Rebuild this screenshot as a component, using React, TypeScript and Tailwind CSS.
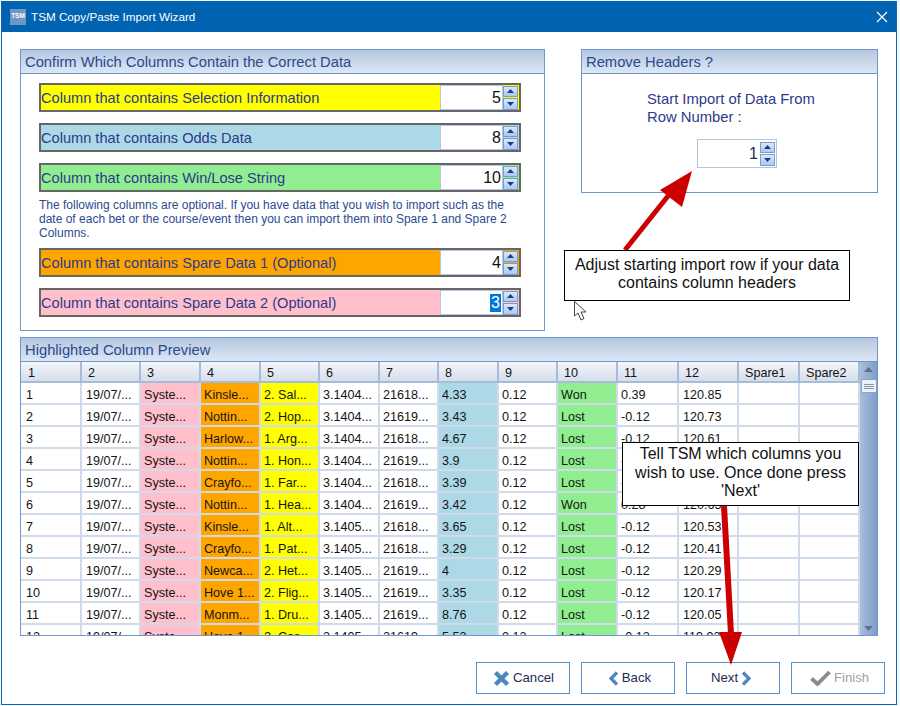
const font = { fontFamily: '"Liberation Sans", Arial, sans-serif' };

const columns = ["1", "2", "3", "4", "5", "6", "7", "8", "9", "10", "11", "12", "Spare1", "Spare2"];

const rows = [
  ["1", "19/07/...", "Syste...", "Kinsle...", "2. Sal...", "3.1404...", "21618...", "4.33", "0.12", "Won", "0.39", "120.85", "", ""],
  ["2", "19/07/...", "Syste...", "Nottin...", "2. Hop...", "3.1404...", "21619...", "3.43", "0.12", "Lost", "-0.12", "120.73", "", ""],
  ["3", "19/07/...", "Syste...", "Harlow...", "1. Arg...", "3.1404...", "21618...", "4.67", "0.12", "Lost", "-0.12", "120.61", "", ""],
  ["4", "19/07/...", "Syste...", "Nottin...", "1. Hon...", "3.1404...", "21619...", "3.9", "0.12", "Lost", "-0.12", "120.49", "", ""],
  ["5", "19/07/...", "Syste...", "Crayfo...", "1. Far...", "3.1404...", "21618...", "3.39", "0.12", "Lost", "-0.12", "120.37", "", ""],
  ["6", "19/07/...", "Syste...", "Nottin...", "1. Hea...", "3.1404...", "21619...", "3.42", "0.12", "Won", "0.28", "120.65", "", ""],
  ["7", "19/07/...", "Syste...", "Kinsle...", "1. Alt...", "3.1405...", "21618...", "3.65", "0.12", "Lost", "-0.12", "120.53", "", ""],
  ["8", "19/07/...", "Syste...", "Crayfo...", "1. Pat...", "3.1405...", "21618...", "3.29", "0.12", "Lost", "-0.12", "120.41", "", ""],
  ["9", "19/07/...", "Syste...", "Newca...", "2. Het...", "3.1405...", "21619...", "4", "0.12", "Lost", "-0.12", "120.29", "", ""],
  ["10", "19/07/...", "Syste...", "Hove 1...", "2. Flig...", "3.1405...", "21619...", "3.35", "0.12", "Lost", "-0.12", "120.17", "", ""],
  ["11", "19/07/...", "Syste...", "Monm...", "1. Dru...", "3.1405...", "21619...", "8.76", "0.12", "Lost", "-0.12", "120.05", "", ""],
  ["12", "19/07/...", "Syste...", "Hove 1...", "2. Cos...", "3.1405...", "21619...", "5.53", "0.12", "Lost", "-0.12", "119.93", "", ""],
];

const cellColors: Record<number, string> = {
  2: "bg-[#ffc0cb]",
  3: "bg-[#ffa500]",
  4: "bg-[#ffff00]",
  7: "bg-[#add8e6]",
  9: "bg-[#90ee90]",
};

const cellPadding = (i: number) => {
  if (i === 0) return "pl-[5px]";
  if (i === 1 || i === 11) return "pl-[4px]";
  return "pl-[3px]";
};

const SpinButtons = () => (
  <div className="flex flex-col gap-px w-[15px] h-[24px] shrink-0">
    {[0, 1].map((i) => (
      <div
        key={i}
        className="flex-1 flex items-center justify-center border border-[#7f9cc4] bg-gradient-to-b from-[#dbe8fb] to-[#a9c9f4]"
      >
        <svg width="7" height="4" viewBox="0 0 7 4">
          <path d={i === 0 ? "M3.5 0 L7 4 L0 4 Z" : "M0 0 L7 0 L3.5 4 Z"} fill="#1f3d7a" />
        </svg>
      </div>
    ))}
  </div>
);

const ColumnRow = ({ label, value, color, selected }: { label: string; value: string; color: string; selected?: boolean }) => (
  <div className={`flex items-center h-[29px] border-2 border-[#666666] ${color}`}>
    <span className="flex-1 pt-[3px] text-[14.6px] text-[#2b3a8c]">{label}</span>
    <div className="w-[63px] h-[25px] bg-white border border-[#b4c8e4] flex items-center justify-end pr-[1px] text-[16px] text-[#111111]">
      {selected ? <span className="bg-[#0078d7] text-white px-[1px] leading-[18px]">{value}</span> : value}
    </div>
    <SpinButtons />
    <div className="w-[1px]" />
  </div>
);

const PanelHeader = ({ title }: { title: string }) => (
  <div className="h-[24px] shrink-0 flex items-center pl-[4px] pt-[1px] text-[14.75px] text-[#2b4a8f] bg-gradient-to-b from-[#b6c7e0] to-[#dde7f4] border-b border-[#6c98cf]">
    {title}
  </div>
);

const CrossIcon = () => (
  <svg width="17" height="17" viewBox="0 0 17 17">
    <path d="M2.5 2.5 L14.5 14.5 M14.5 2.5 L2.5 14.5" stroke="#4a86c0" strokeWidth="4.4" />
  </svg>
);

const BackIcon = () => (
  <svg width="11" height="15" viewBox="0 0 11 15">
    <path d="M9 1.5 L3 7.5 L9 13.5" stroke="#4a86c0" strokeWidth="3.2" fill="none" />
  </svg>
);

const NextIcon = () => (
  <svg width="11" height="15" viewBox="0 0 11 15">
    <path d="M2 1.5 L8 7.5 L2 13.5" stroke="#4a86c0" strokeWidth="3.2" fill="none" />
  </svg>
);

const CheckIcon = () => (
  <svg width="21" height="16" viewBox="0 0 21 16">
    <path d="M1.5 8.5 L7.5 14 L19.5 2" stroke="#8a8a8a" strokeWidth="3.8" fill="none" />
  </svg>
);

const WizardButton = ({ children, className = "" }: { children: React.ReactNode; className?: string }) => (
  <div className={`w-[94px] h-[32px] shrink-0 flex items-center justify-center gap-[3px] bg-white border border-[#5b8ecf] text-[13.2px] text-[#1c2c55] ${className}`}>
    {children}
  </div>
);

export default function App() {
  return (
    <div className="relative w-[900px] h-[706px] overflow-hidden bg-[#f6f7f9] pl-px pt-px" style={font}>
      <div className="w-[896px] h-[704px] flex flex-col bg-white border-x border-b border-[#0f68b4]">
        {/* title bar */}
        <div className="h-[31px] shrink-0 flex items-center bg-[#0063b1] pl-[8px] pr-[8px] text-white">
          <div className="w-[16px] h-[16px] bg-[#6f97c4] flex items-center justify-center text-[6.5px] font-bold leading-none">TSM</div>
          <span className="ml-[5px] text-[11.7px] flex-1">TSM Copy/Paste Import Wizard</span>
          <svg width="12" height="12" viewBox="0 0 12 12">
            <path d="M1 1 L11 11 M11 1 L1 11" stroke="white" strokeWidth="1.2" />
          </svg>
        </div>

        <div className="flex-1 flex flex-col pt-[17px] pl-[18px]">
          <div className="flex gap-[36px] h-[282px]">
            <div className="w-[525px] border border-[#6c98cf] flex flex-col">
              <PanelHeader title="Confirm Which Columns Contain the Correct Data" />
              <div className="flex flex-col pt-[9px] pl-[18px] pr-[23px]">
                <div className="flex flex-col gap-[11px]">
                  <ColumnRow label="Column that contains Selection Information" value="5" color="bg-[#ffff00]" />
                  <ColumnRow label="Column that contains Odds Data" value="8" color="bg-[#add8e6]" />
                  <ColumnRow label="Column that contains Win/Lose String" value="10" color="bg-[#90ee90]" />
                </div>
                <p className="mt-[6px] mb-[8px] text-[12px] leading-[14px] text-[#2b4a8f] whitespace-nowrap">
                  The following columns are optional. If you have data that you wish to import such as the
                  <br />
                  date of each bet or the course/event then you can import them into Spare 1 and Spare 2
                  <br />
                  Columns.
                </p>
                <div className="flex flex-col gap-[11px]">
                  <ColumnRow label="Column that contains Spare Data 1 (Optional)" value="4" color="bg-[#ffa500]" />
                  <ColumnRow label="Column that contains Spare Data 2 (Optional)" value="3" color="bg-[#ffc0cb]" selected />
                </div>
              </div>
            </div>

            <div className="w-[297px] h-[144px] border border-[#6c98cf] flex flex-col">
              <PanelHeader title="Remove Headers ?" />
              <div className="flex flex-col pt-[16px] pl-[65px] text-[14.8px] leading-[18px] text-[#2b3a8c]">
                <span>Start Import of Data From</span>
                <span>Row Number :</span>
                <div className="mt-[13px] ml-[50px] w-[80px] h-[29px] flex items-center border border-[#b4c4dc]">
                  <span className="flex-1 text-right pr-[2px] text-[16px] text-[#1c2c55]">1</span>
                  <SpinButtons />
                  <div className="w-[1px]" />
                </div>
              </div>
            </div>
          </div>

          {/* grid panel */}
          <div className="mt-[6px] w-[858px] h-[299px] border border-[#6c98cf] flex flex-col overflow-hidden">
            <PanelHeader title="Highlighted Column Preview" />
            <div className="flex-1 flex min-h-0">
              <div className="flex-1 min-w-0 overflow-hidden">
                <div className="grid grid-cols-[61px_59px_60px_60px_59px_60px_59px_60px_59px_60px_61px_60px_61px_60px] text-[12.6px] text-[#141414]">
                  {columns.map((c, i) => (
                    <div
                      key={c}
                      className={`h-[21px] flex items-center pt-[4px] border-r-2 border-b-2 border-[#a6bcd9] bg-gradient-to-b from-[#f4f6fb] to-[#d5deeb] ${i === 0 ? "pl-[7px]" : "pl-[6px]"}`}
                    >
                      {c}
                    </div>
                  ))}
                  {rows.map((row) =>
                    row.map((cell, i) => (
                      <div
                        key={`${row[0]}-${i}`}
                        className={`h-[22px] flex items-center pt-[4px] whitespace-nowrap overflow-hidden border-r-2 border-b-2 border-[#cfdaea] ${cellPadding(i)} ${cellColors[i] ?? "bg-white"}`}
                      >
                        {cell}
                      </div>
                    ))
                  )}
                </div>
              </div>
              {/* scrollbar */}
              <div className="w-[17px] shrink-0 flex flex-col items-center bg-gradient-to-r from-[#a9bedd] to-[#7e9dc7]">
                <svg className="mt-[5px]" width="9" height="5" viewBox="0 0 9 5">
                  <path d="M4.5 0 L9 5 L0 5 Z" fill="#5b6f8f" />
                </svg>
                <div className="mt-[7px] w-[16px] h-[14px] rounded-[2px] border border-[#8aa2c4] bg-[#eef2f8] flex flex-col items-center justify-center gap-px">
                  <div className="w-[10px] h-px bg-[#8a97a8]" />
                  <div className="w-[10px] h-px bg-[#8a97a8]" />
                  <div className="w-[10px] h-px bg-[#8a97a8]" />
                </div>
                <div className="flex-1" />
                <svg className="mb-[4px]" width="9" height="5" viewBox="0 0 9 5">
                  <path d="M0 0 L9 0 L4.5 5 Z" fill="#5b6f8f" />
                </svg>
              </div>
            </div>
          </div>

          {/* footer buttons */}
          <div className="mt-[26px] flex gap-[11px] pl-[456px]">
            <WizardButton className="pl-[1px]">
              <CrossIcon />
              <span>Cancel</span>
            </WizardButton>
            <WizardButton className="pl-[3px]">
              <BackIcon />
              <span>Back</span>
            </WizardButton>
            <WizardButton className="pr-[3px]">
              <span>Next</span>
              <NextIcon />
            </WizardButton>
            <WizardButton className="pl-[3px]">
              <CheckIcon />
              <span className="text-[#a0a0a0]">Finish</span>
            </WizardButton>
          </div>
        </div>
      </div>

      {/* annotation arrows */}
      <svg className="absolute left-0 top-0 pointer-events-none" width="900" height="706" viewBox="0 0 900 706">
        <path d="M625 250 L672 191" stroke="#cc0000" strokeWidth="5" />
        <path d="M692 171 L660 190 L682 207 Z" fill="#cc0000" />
        <path d="M724 506 L731 634" stroke="#cc0000" strokeWidth="6" />
        <path d="M719 632 L742 632 L731 665 Z" fill="#cc0000" />
        <path
          d="M574.5 301.5 L574.5 316 L578 313 L581 320 L584 318.5 L581 312 L586 312 Z"
          fill="white"
          stroke="#444444"
          strokeWidth="1"
        />
      </svg>

      {/* callouts */}
      <div className="absolute left-[564px] top-[250px] w-[286px] h-[51px] flex items-center justify-center text-center pb-[3px] bg-white border border-black text-[16px] leading-[18px] text-[#111111]">
        Adjust starting import row if your data
        <br />
        contains column headers
      </div>
      <div className="absolute left-[622px] top-[442px] w-[237px] h-[64px] flex items-center justify-center text-center pb-[2px] bg-white border border-black text-[16px] leading-[18.5px] text-[#111111]">
        Tell TSM which columns you
        <br />
        wish to use. Once done press
        <br />
        'Next'
      </div>
    </div>
  );
}
